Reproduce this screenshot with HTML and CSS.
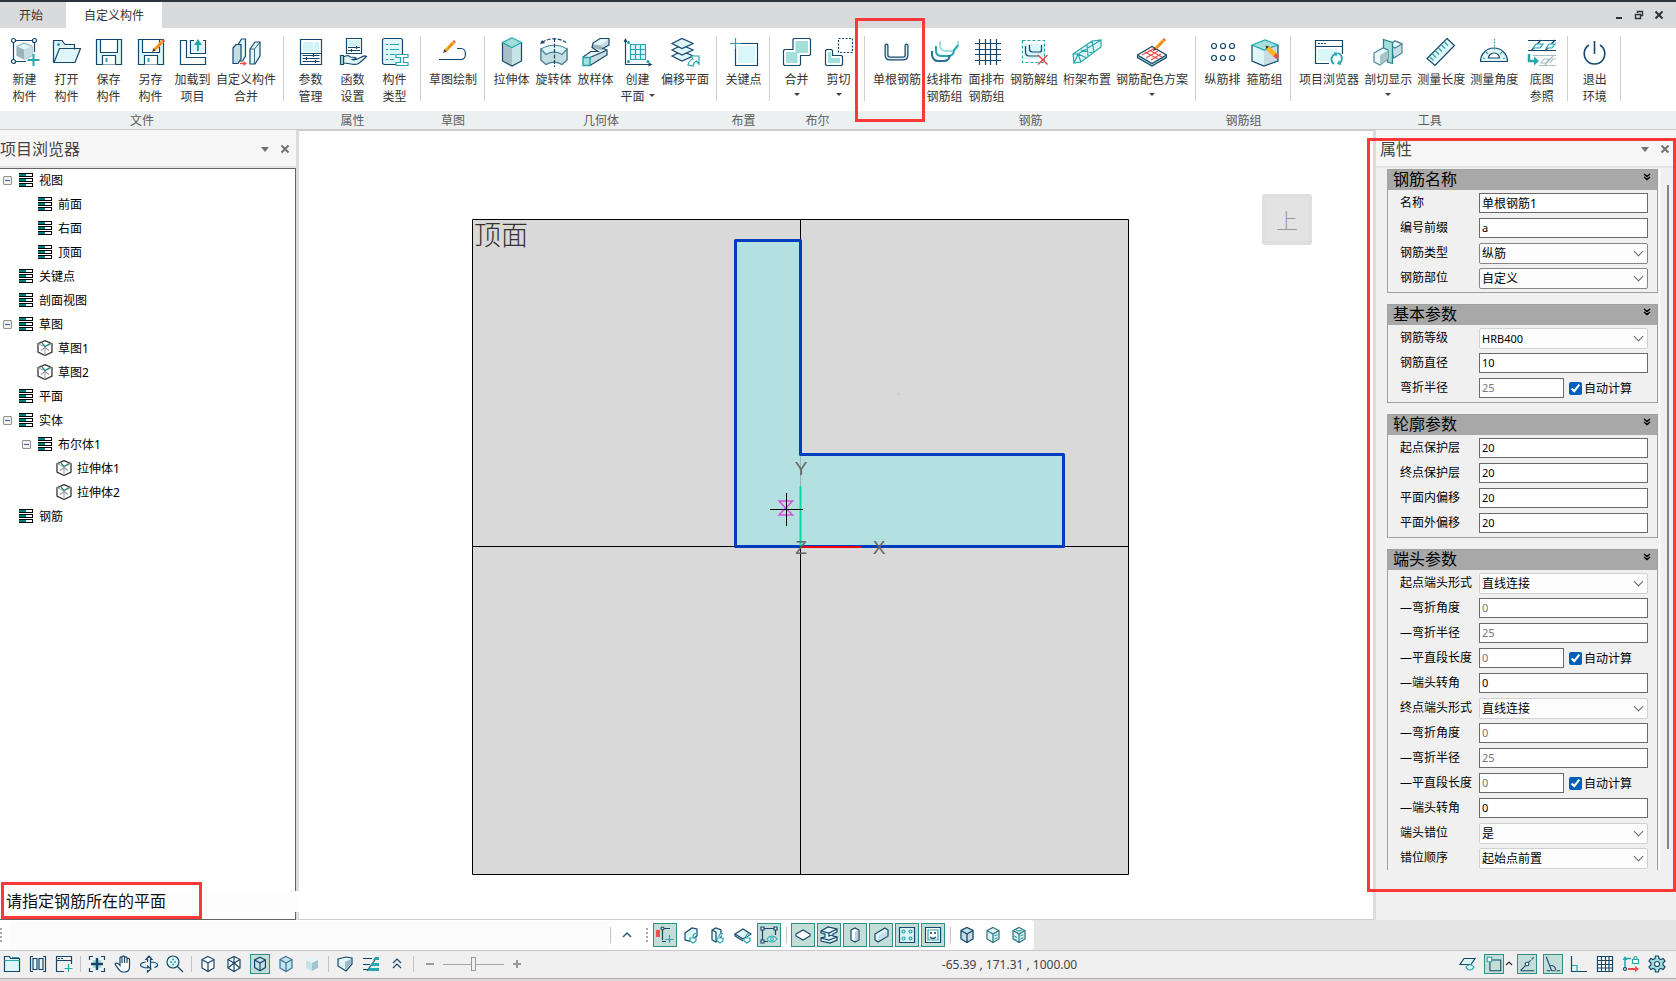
FILE: index.html
```html
<!DOCTYPE html>
<html lang="zh-CN">
<head>
<meta charset="utf-8">
<title>自定义构件</title>
<link rel="stylesheet" href="styles.css">
</head>
<body>
<svg class="defs" aria-hidden="true">
  <symbol id="pencil" viewBox="0 0 12 12"><path d="M1 11l1-3L9 1l2 2-7 7z" fill="#ffb21a"/><path d="M9 1l1-1 2 2-1 1z" fill="#f04a4a"/><path d="M8 2l2 2-6 6-1-1z" fill="#f58a1f"/><path d="M0 12l1.400-3.600 2.200 2.200z" fill="#5a3a35"/></symbol>
  <symbol id="list" viewBox="0 0 14 14"><path d="M0 0h14v4H0zM0 5h14v4H0zM0 10h14v4H0z" fill="#000"/><path d="M0 1h7v2H0zM0 6h7v2H0zM0 11h7v2H0z" fill="#008080"/><path d="M7 1h6v2H7zM7 6h6v2H7zM7 11h6v2H7z" fill="#fff"/></symbol>
  <symbol id="solid" viewBox="0 0 16 16"><path d="M8 .7l7 3v8.500l-7 3.300-7-3.300V3.700z" fill="#fff" stroke="#333" stroke-width="1.300"/><path d="M1 3.700l7 3 7-3M8 6.700v8.500" stroke="#aaa"/><path d="M8 6.500l5-3M5 3l3 3.500" stroke="#23807f"/><path d="M8 7.500l-4 3M8 7.500l4 3" stroke="#999"/></symbol>
  <symbol id="cube" viewBox="0 0 20 20"><path d="M10 2.500l6 3v8.500l-6 3.500-6-3.500V5.500z"/><path d="M4 5.500l6 3.500 6-3.500M10 9v8.500" fill="none"/></symbol>
  <symbol id="chev2" viewBox="0 0 8 8"><path d="M1 1l3 2.500L7 1M1 4l3 2.500L7 4" stroke="#000" stroke-width="1.500"/></symbol>
  <symbol id="close" viewBox="0 0 10 10"><path d="M1.500 1.500l7 7M8.500 1.500l-7 7" stroke="currentColor" stroke-width="2"/></symbol>
</svg>

<header class="topbar">
  <nav class="tabs">
    <button class="tab tab-start">开始</button>
    <button class="tab active">自定义构件</button>
  </nav>
  <div class="window-buttons">
    <button aria-label="最小化"><svg viewBox="0 0 10 10"><path d="M2 8h6" stroke="#333" stroke-width="2"/></svg></button>
    <button aria-label="还原"><svg viewBox="0 0 10 10"><path d="M3.500 3V1.500h5v4H7" stroke="#333" stroke-width="1.400"/><path d="M1.500 4.500h5v4h-5z" stroke="#333" stroke-width="1.400"/></svg></button>
    <button aria-label="关闭"><svg viewBox="0 0 10 10"><use href="#close"/></svg></button>
  </div>
</header>

<section class="ribbon">
  <div class="group first">
    <div class="tools">
      <button class="tool"><svg viewBox="0 0 30 30"><path class="n" d="M6 3.500h16M3.500 6v16M24.500 6v9M6 24.500h10"/><circle class="n w" cx="3.500" cy="3.500" r="2"/><circle class="n w" cx="24.500" cy="3.500" r="2"/><circle class="n w" cx="3.500" cy="24.500" r="2"/><path d="M14 6l8 3.500v9L14 22l-7-3.500v-9z" fill="#dff6f8" stroke="#8fb3bd"/><path d="M7 9.500l7 3V22l-7-3.500z" fill="#9db4bb"/><path d="M14 12.500l8-3v9L14 22z" fill="#c5dde3"/><path d="M23.500 17v12M17.500 23h12" stroke="#26a6ad" stroke-width="2"/></svg><span>新建<br>构件</span></button>
      <button class="tool"><svg viewBox="0 0 30 30"><path class="n f" d="M1.500 25.500v-22H10l3 4h9.500v5M2 25.500L7.500 11.500h21L23 25.500z"/><circle cx="6.500" cy="7.500" r="1.500" fill="#26a6ad"/></svg><span>打开<br>构件</span></button>
      <button class="tool"><svg viewBox="0 0 30 30"><path class="n f" d="M2.500 2.500h25v25h-25z"/><path class="n w" d="M6.500 2.500h17v13h-17zM8.500 27.500v-9h13v9"/><path class="t2" d="M12.500 21v4"/></svg><span>保存<br>构件</span></button>
      <button class="tool"><svg viewBox="0 0 30 30"><path class="n f" d="M2.500 2.500h25v25h-25z"/><path class="n w" d="M6.500 2.500h17v13h-17zM8.500 27.500v-9h13v9"/><path class="t2" d="M12.500 21v4"/><use href="#pencil" x="16" y="2" width="13" height="13"/></svg><span>另存<br>构件</span></button>
      <button class="tool"><svg viewBox="0 0 30 30"><path class="n" d="M2.500 3.500h6v17h19v7h-25z"/><path class="n" d="M16 3.500h-3.500v13h15v-13H25"/><path d="M14 5h12v10H14z" fill="#dff6f8"/><path d="M20 14V7" stroke="#26a6ad" stroke-width="2"/><path d="M16 8l4-6 4 6z" fill="#26a6ad"/></svg><span>加载到<br>项目</span></button>
      <button class="tool"><svg viewBox="0 0 30 30"><path class="n f" d="M7.500 24V7l3-5h4v17l-3 5z"/><path class="n" d="M2 11l3-3.500h5V22l-3 4.500H2z" fill="#c2dde3"/><path class="n f" d="M19 12l5-7h5v14l-5 8h-5z"/><path class="n" d="M19 12h4.500v15M23.500 12L29 5" stroke-width=".8"/><path d="M9 26.500h4" stroke="#f04a4a" stroke-width="1.500"/><path d="M12.500 24l3.500 2.500-3.500 2.500z" fill="#f04a4a"/></svg><span>自定义构件<br>合并</span></button>
    </div>
    <div class="group-title">文件</div>
  </div>
  <div class="group">
    <div class="tools">
      <button class="tool"><svg viewBox="0 0 30 30"><path class="n w" d="M4.500 2.500h21v25h-21z"/><path d="M7 5h10v10H7zM18 5h5v10h-5z" fill="#d3f4f7"/><path class="n" d="M4.500 16.500h21M6.500 18.500h17M6.500 21.500h17M6.500 24.500h17M17.500 17v3M10.500 20v3M19.500 23v3"/></svg><span>参数<br>管理</span></button>
      <button class="tool"><svg viewBox="0 0 30 30"><path class="n w" d="M8.500 1.500h15v15h-15z"/><path d="M10 3h12v6H10z" fill="#d3f4f7"/><path class="n" d="M10 10.500h12M10 13.500h12M18.500 9v3M13.500 12v3"/><path class="n f" d="M5.500 20c3-2 5-2 7 0l5 .5c2 1-1 2-4 2 4 1 6 0 9-2s5-2 6-1c-3 3-6 6-9 7.500-4 1.500-9-1-14-1z"/><path class="n" d="M2.500 18.500h3v9h-3z" fill="#a3e0dc"/></svg><span>函数<br>设置</span></button>
      <button class="tool"><svg viewBox="0 0 30 30"><rect class="n f" x="2.500" y="1.500" width="20" height="26" rx="2"/><path class="t" d="M6 7.500h2M10 7.500h9M6 12.500h2M10 12.500h9M6 17.500h2M10 17.500h5M6 22.500h2M10 22.500h4"/><path d="M16 17.500h12v3h-4.500v5H28v3H16v-3h4.500v-5H16z" class="t w"/></svg><span>构件<br>类型</span></button>
    </div>
    <div class="group-title">属性</div>
  </div>
  <div class="group">
    <div class="tools">
      <button class="tool"><svg viewBox="0 0 30 30"><path class="n" d="M1 22.500h22c6 0 6-11 0-11h-4"/><use href="#pencil" x="5" y="3" width="13" height="13"/></svg><span>草图绘制</span></button>
    </div>
    <div class="group-title">草图</div>
  </div>
  <div class="group">
    <div class="tools">
      <button class="tool"><svg viewBox="0 0 30 30"><path d="M5.500 5.500l9.500 5V29l-9.500-5z" fill="#a9bfc5"/><path d="M24.500 5.500l-9.500 5V29l9.500-5z" fill="#c8e3e8"/><path class="n" d="M5.500 5.500V24l9.500 5 9.500-5V5.500"/><path d="M15 .7l9.500 4.800L15 10.500 5.500 5.500z" fill="#a3e0dc" stroke="#26a6ad"/></svg><span>拉伸体</span></button>
      <button class="tool"><svg viewBox="0 0 30 30"><path class="f" d="M2 12c8-5 18-5 26 0v11l-5 4.500c-5-3-11-3-16 0L2 23z" stroke="#4f8396"/><path d="M2 12l5 5.500c5-3 11-3 16 0l5-5.500v11l-5 4.500c-5-3-11-3-16 0L2 23z" fill="#c5dde3" stroke="#4f8396"/><path class="n" d="M3 5.500c7-5 17-5 24 0M15.500 1v29" stroke-dasharray="4 1.500"/><path d="M1 7l2-4 3 3z" fill="#16476a"/></svg><span>旋转体</span></button>
      <button class="tool"><svg viewBox="0 0 30 30"><path d="M2 20l8-5.500h7l-6-4 1-4.500 7-4.500h9V8l-6 3.500 4 1.500v5L9 28.500H2z" fill="#c5dde3"/><path d="M2 20l8-5.500h7l-6-4 1-3.500 7-5h8l-8 7 6 4-14 7.500z" fill="#e8f8fa"/><path d="M11 10.500l1-3 8 1 3 3-2 2z" fill="#9db4bb"/><path class="n" d="M2 20l8-5.500h7l-6-4 1-4.500 7-4.500h9V8l-6 3.500 4 1.500v5L9 28.500M9 20.500l16-7"/><path d="M2 20.500h7v8H2z" fill="#a3e0dc" stroke="#26a6ad" stroke-width="1.500"/></svg><span>放样体</span></button>
      <button class="tool"><svg viewBox="0 0 30 30"><path d="M7.500 7.500h15v15h-15z" fill="#dff6f8"/><path class="t" d="M7.500 7.500h15v15h-15zM12.500 7.500v15M17.500 7.500v15M7.500 12.500h15M7.500 17.500h15"/><path class="n" d="M2.500 3v24.500H27"/><path d="M2.500 1l2 4h-4zM29.500 27.500l-4-2v4z" fill="#16476a"/><circle cx="5.500" cy="5.500" r="1.600" fill="#26a6ad"/><circle cx="5.500" cy="24.500" r="1.600" fill="#26a6ad"/><circle cx="25" cy="24.500" r="1.600" fill="#26a6ad"/></svg><span>创建<br>平面<i class="caret inline"></i></span></button>
      <button class="tool"><svg viewBox="0 0 30 30"><path class="n f" d="M2 19l10-5 11 5-11 5z"/><path class="n f" d="M2 13l10-5 11 5-11 5z"/><path class="n f" d="M2 6.500l10-5 11 5-11 5z"/><path class="t w" d="M18 28c1-4 2-5 5-6l-2-3h8v8l-2.500-3c-2 1-3 2-3.500 5z"/></svg><span>偏移平面</span></button>
    </div>
    <div class="group-title">几何体</div>
  </div>
  <div class="group">
    <div class="tools">
      <button class="tool"><svg viewBox="0 0 30 30"><path d="M9 9h17v17H9z" fill="#d9f7f9"/><path class="n" d="M10 6.500h18.500v22h-22V10"/><path class="t" d="M6.500 1v11M1 6.500h11"/></svg><span>关键点</span></button>
    </div>
    <div class="group-title">布置</div>
  </div>
  <div class="group">
    <div class="tools">
      <button class="tool"><svg viewBox="0 0 30 30"><path d="M4 15h9.500V4H26v12H15.500v10H4z" fill="#a3e0dc"/><path class="n" d="M2.500 12.500H11v-10l1-1h15.500l1 1v15l-1 1h-9v9l-1 1h-15l-1-1v-14z"/></svg><span>合并<br><i class="caret"></i></span></button>
      <button class="tool"><svg viewBox="0 0 30 30"><path d="M4 15h3v6h9v5H4z" fill="#a3e0dc"/><path class="n" d="M2.500 12.500h5l1 1v5h9l1 1v8l-1 1h-15l-1-1v-14z"/><path class="n" stroke-dasharray="2 1.500" d="M14.500 1.500h14v14h-14z"/></svg><span>剪切<br><i class="caret"></i></span></button>
    </div>
    <div class="group-title">布尔</div>
  </div>
  <div class="group">
    <div class="tools">
      <button class="tool"><svg viewBox="0 0 30 30"><path d="M4.500 8.500v9.500q0 3.500 3.500 3.500h13q3.500 0 3.500-3.500V8.500" stroke="#16476a" stroke-width="4" stroke-linecap="round"/><path d="M4.500 8.500v9.500q0 3.500 3.500 3.500h13q3.500 0 3.500-3.500V8.500" stroke="#e0f2f6" stroke-width="1.500" stroke-linecap="round"/></svg><span>单根钢筋</span></button>
      <button class="tool"><svg viewBox="0 0 30 30" stroke-width="2"><path class="thick" stroke="#a3e0dc" d="M10 4v4q0 6 6 6h5q6 0 7-6V4"/><path class="thick" stroke="#26a6ad" d="M6 9v5q0 5 6 5h6q6 0 6-6l4-5"/><path class="thick" stroke="#2e6f97" d="M2 14v4q1 6 6 6h6q5 0 6-6"/></svg><span>线排布<br>钢筋组</span></button>
      <button class="tool"><svg viewBox="0 0 30 30"><path class="n" d="M7.500 2v26M13.500 2v26M18.500 2v26M24.500 2v26M3 6.500h26M3 12.500h26M3 17.500h26M3 23.500h26"/></svg><span>面排布<br>钢筋组</span></button>
      <button class="tool"><svg viewBox="0 0 30 30"><path d="M5 7h21v15H5z" fill="#d9f5f8"/><path class="t" stroke-dasharray="3 2" d="M3.500 3.500h22v22h-22z"/><path class="n" d="M6.500 9v6q0 4 4 4h9M10.500 8v4q0 3 3 3h7q2 0 2-2V8"/><path d="M19 18l9.500 9.500M28.500 18L19 27.500" stroke="#f04a4a" stroke-width="1.500"/></svg><span>钢筋解组</span></button>
      <button class="tool"><svg viewBox="0 0 30 30"><path class="f" d="M1 17L20 4l9-1v7L9 25l-7 1z"/><path class="t" d="M1 17L20 4l9-1v7L9 25l-7 1zM1 17l5 0 23-14M6 17l3 8M2 26l4-9M6 17l9 4M9 13l12 3M15 8l1 12M20 4l2 11"/></svg><span>桁架布置</span></button>
      <button class="tool"><svg viewBox="0 0 30 30"><path class="n" d="M0.500 18v2.500L15 29l14.500-8.500V18" fill="#a3e0dc"/><path class="n w" d="M.500 18L15 9.500 29.500 18 15 26.500z"/><path d="M8 15l13 7M12 13l13 7M5 18l13-7M9 21l12-7M14 23l10-6" stroke="#f04a4a"/><use href="#pencil" x="16" y="1" width="13" height="13"/></svg><span>钢筋配色方案<br><i class="caret"></i></span></button>
    </div>
    <div class="group-title">钢筋</div>
  </div>
  <div class="group">
    <div class="tools">
      <button class="tool"><svg viewBox="0 0 30 30"><g class="n"><circle cx="6" cy="9" r="2.500"/><circle cx="15" cy="9" r="2.500"/><circle cx="24" cy="9" r="2.500"/><circle cx="6" cy="21" r="2.500"/><circle cx="15" cy="21" r="2.500"/><circle cx="24" cy="21" r="2.500"/></g></svg><span>纵筋排</span></button>
      <button class="tool"><svg viewBox="0 0 30 30"><path class="f" d="M2 8l12 5v16L2 24z"/><path d="M14 13l14-5v16l-14 5z" fill="#c5dde3"/><path class="n" d="M2 8v16l12 5 14-5V8"/><path d="M2 8l13-5 13 5-14 5z" fill="#a3e0dc" stroke="#26a6ad"/><path d="M16 9l3.500.500 8.500 8-3 3.500-8.500-8z" fill="#ffb21a"/><path d="M26 16l3 3-2.500 3-3-2.500z" fill="#f04a4a"/><path d="M15.500 8.500l3.500 1-2.500 2.500z" fill="#412a2a"/></svg><span>箍筋组</span></button>
    </div>
    <div class="group-title">钢筋组</div>
  </div>
  <div class="group">
    <div class="tools">
      <button class="tool"><svg viewBox="0 0 30 30"><path class="n" d="M15 26.500H1.500v-23h27V17M1.500 9.500h27"/><path d="M4 12h20v4l-6 2-2 6H4z" fill="#d9f7f9"/><path class="n" stroke-dasharray="2 1" d="M4 6.500h8"/><path class="t" stroke-width="1.800" d="M20 27c-4-3-3-8 1-10M24 16c5 2 5 8 1 11"/><path d="M20 15l4 1-2 4zM27 28l-4-1 2-4z" fill="#26a6ad"/></svg><span>项目浏览器</span></button>
      <button class="tool"><svg viewBox="0 0 30 30"><path d="M16 8l6-4 7 3v9l-8 5z" fill="#c5dde3" stroke="#4f8396"/><path d="M16 8l6-4 7 3-7 4z" fill="#e8f8fa" stroke="#4f8396"/><path d="M10.500 2.500l9 3v21l-5-1.500V13l-4-2z" fill="#a3e0dc" stroke="#26838f" stroke-width="1.300"/><path d="M1 16l9-5 5 2v9L7 28l-6-3z" fill="#e8f8fa" stroke="#4f8396"/><path d="M7 18.500l8-5.500v9L7 28z" fill="#a9c3ca"/></svg><span>剖切显示<br><i class="caret"></i></span></button>
      <button class="tool"><svg viewBox="0 0 30 30"><path class="n f" d="M21 1.500l7.500 7L9 28.500l-8-7z"/><path class="t" d="M18.500 5l3.500 3.500M15.500 8l3.500 3.500M12.500 11l3.500 3.500M9.500 14l3.500 3.500M6.500 17l3.500 3.500M4 20l3.500 3.500"/></svg><span>测量长度</span></button>
      <button class="tool"><svg viewBox="0 0 30 30"><path class="n f" d="M1.500 24.500a13.500 13.500 0 0 1 27 0z"/><path class="n w" d="M9.500 21a5.500 5 0 0 1 11 0z"/><path class="t" stroke-dasharray="1.500 1.500" d="M15.500 2v11"/><path class="t" d="M4 21l2 .5M7 15l2 2M26 21l-2 .5M23 15l-2 2"/></svg><span>测量角度</span></button>
      <button class="tool"><svg viewBox="0 0 30 30"><path class="n" d="M1 3.500h28M1 13.500h28M4 14L14 3M18 14L28 3"/><path class="t f" d="M6 11l3-4h7l-3 4zM19 11l3-4h6l-3 4z"/><path d="M6 18.500h23M12 28.500h17M18 28l8-9M14 26l3-4h5l-3 4zM23 26l3-4h3" stroke="#a3c0c8"/><path d="M2 17v7h6" stroke="#26a6ad" stroke-width="2.500"/><path d="M7 19.500l5 4.500-5 4.500z" fill="#26a6ad"/></svg><span>底图<br>参照</span></button>
    </div>
    <div class="group-title">工具</div>
  </div>
  <div class="group">
    <div class="tools">
      <button class="tool"><svg viewBox="0 0 30 30"><path class="n" stroke-width="1.600" d="M9 8a10.300 10.300 0 1 0 11 0M14.500 4v13"/></svg><span>退出<br>环境</span></button>
    </div>
    <div class="group-title"></div>
  </div>
  <div class="group-rest"><div class="group-title"></div></div>
  <div class="mark mark-tool"></div>
</section>

<main class="workspace">
  <aside class="browser">
    <div class="panel-head"><h2>项目浏览器</h2><button aria-label="菜单"><i class="down"></i></button><button aria-label="关闭"><svg viewBox="0 0 10 10"><use href="#close"/></svg></button></div>
    <ul class="tree">
      <li><i class="toggle"></i><svg><use href="#list"/></svg>视图</li>
      <li class="l1"><svg><use href="#list"/></svg>前面</li>
      <li class="l1"><svg><use href="#list"/></svg>右面</li>
      <li class="l1"><svg><use href="#list"/></svg>顶面</li>
      <li class="l0"><svg><use href="#list"/></svg>关键点</li>
      <li class="l0"><svg><use href="#list"/></svg>剖面视图</li>
      <li><i class="toggle"></i><svg><use href="#list"/></svg>草图</li>
      <li class="l1"><svg class="big"><use href="#solid"/></svg>草图1</li>
      <li class="l1"><svg class="big"><use href="#solid"/></svg>草图2</li>
      <li class="l0"><svg><use href="#list"/></svg>平面</li>
      <li><i class="toggle"></i><svg><use href="#list"/></svg>实体</li>
      <li class="sub"><i class="toggle"></i><svg><use href="#list"/></svg>布尔体1</li>
      <li class="l2"><svg class="big"><use href="#solid"/></svg>拉伸体1</li>
      <li class="l2"><svg class="big"><use href="#solid"/></svg>拉伸体2</li>
      <li class="l0"><svg><use href="#list"/></svg>钢筋</li>
    </ul>
    <div class="prompt">请指定钢筋所在的平面</div>
    <div class="mark mark-prompt"></div>
  </aside>

  <section class="canvas">
    <svg class="scene" viewBox="299 131 1074 788">
      <path d="M472.500 219.500h656v655h-656z" fill="#d9d9d9" stroke="#000"/>
      <path d="M800.500 219v656M472 546.500h657" stroke="#000"/>
      <path d="M735.500 240.500h65v214h263v92h-328z" fill="#b3e0e1" stroke="#003cc0" stroke-width="3" stroke-linejoin="round"/>
      <path d="M800.500 456v30" stroke="#9cb5b0"/>
      <path d="M800.500 486v60" stroke="#00dca0" stroke-width="2"/>
      <path d="M801 547h60" stroke="#f00000" stroke-width="2"/>
      <path d="M779 501h13.500l-13.500 14h13.500z" stroke="#d850d8" stroke-width="1.500"/>
      <path d="M786.500 493v33M770 509.500h33" stroke="#000"/>
      <path d="M898 394h1" stroke="#aaa"/>
      <text x="801" y="475" class="axis">Y</text>
      <text x="801" y="554" class="axis">Z</text>
      <text x="879" y="554" class="axis">X</text>
      <text x="474" y="245" class="view-name">顶面</text>
      <rect x="1262" y="194" width="50" height="51" rx="3" fill="#dfdfdf"/>
      <path d="M1266 198h42v43h-42z" fill="#e3e3e3"/>
      <text x="1287" y="229" class="face">上</text>
    </svg>
  </section>

  <aside class="props">
    <div class="panel-head"><h2>属性</h2><button aria-label="菜单"><i class="down"></i></button><button aria-label="关闭"><svg viewBox="0 0 10 10"><use href="#close"/></svg></button></div>
    <div class="props-body">
      <div class="sections">
        <fieldset class="card">
          <div class="card-head">钢筋名称<svg><use href="#chev2"/></svg></div>
          <div class="row"><label for="a1">名称</label><input id="a1" value="单根钢筋1"></div>
          <div class="row"><label for="a2">编号前缀</label><input id="a2" class="num" value="a"></div>
          <div class="row"><label for="a3">钢筋类型</label><span class="sel edge"><select id="a3"><option>纵筋</option></select></span></div>
          <div class="row"><label for="a4">钢筋部位</label><span class="sel edge"><select id="a4"><option>自定义</option></select></span></div>
        </fieldset>
        <fieldset class="card">
          <div class="card-head">基本参数<svg><use href="#chev2"/></svg></div>
          <div class="row"><label for="b1">钢筋等级</label><span class="sel"><select id="b1" class="num"><option>HRB400</option></select></span></div>
          <div class="row"><label for="b2">钢筋直径</label><input id="b2" class="num" value="10"></div>
          <div class="row"><label for="b3">弯折半径</label><input id="b3" class="num" disabled value="25"><label class="auto"><input type="checkbox" checked>自动计算</label></div>
        </fieldset>
        <fieldset class="card">
          <div class="card-head">轮廓参数<svg><use href="#chev2"/></svg></div>
          <div class="row"><label for="c1">起点保护层</label><input id="c1" class="num" value="20"></div>
          <div class="row"><label for="c2">终点保护层</label><input id="c2" class="num" value="20"></div>
          <div class="row"><label for="c3">平面内偏移</label><input id="c3" class="num" value="20"></div>
          <div class="row"><label for="c4">平面外偏移</label><input id="c4" class="num" value="20"></div>
        </fieldset>
        <fieldset class="card open">
          <div class="card-head">端头参数<svg><use href="#chev2"/></svg></div>
          <div class="row"><label for="d1">起点端头形式</label><span class="sel"><select id="d1"><option>直线连接</option></select></span></div>
          <div class="row"><label for="d2">—弯折角度</label><input id="d2" class="num" disabled value="0"></div>
          <div class="row"><label for="d3">—弯折半径</label><input id="d3" class="num" disabled value="25"></div>
          <div class="row"><label for="d4">—平直段长度</label><input id="d4" class="num" disabled value="0"><label class="auto"><input type="checkbox" checked>自动计算</label></div>
          <div class="row"><label for="d5">—端头转角</label><input id="d5" class="num" value="0"></div>
          <div class="row"><label for="d6">终点端头形式</label><span class="sel"><select id="d6"><option>直线连接</option></select></span></div>
          <div class="row"><label for="d7">—弯折角度</label><input id="d7" class="num" disabled value="0"></div>
          <div class="row"><label for="d8">—弯折半径</label><input id="d8" class="num" disabled value="25"></div>
          <div class="row"><label for="d9">—平直段长度</label><input id="d9" class="num" disabled value="0"><label class="auto"><input type="checkbox" checked>自动计算</label></div>
          <div class="row"><label for="d10">—端头转角</label><input id="d10" class="num" value="0"></div>
          <div class="row"><label for="d11">端头错位</label><span class="sel"><select id="d11"><option>是</option></select></span></div>
          <div class="row"><label for="d12">错位顺序</label><span class="sel"><select id="d12"><option>起始点前置</option></select></span></div>
        </fieldset>
      </div>
      <div class="scroll"><i></i></div>
    </div>
    <div class="mark mark-props"></div>
  </aside>
</main>

<section class="viewbar">
  <div class="viewbar-cmd"><i class="grip"></i><div class="cmd-field"></div></div>
  <div class="viewbar-tools">
    <i class="sep"></i>
    <button class="vb wide"><svg viewBox="0 0 20 20"><path d="M6 12l4-4 4 4" stroke="#2b6178" stroke-width="1.500"/></svg></button>
    <i class="grip"></i>
    <button class="vb on"><svg viewBox="0 0 20 20"><path d="M1 5h4v7H1z" fill="#f05050"/><path class="n" d="M7.500 4v11M9 3.500h6M7 16.500h4"/><circle class="n w" cx="7.500" cy="3.500" r="1.500"/><path class="t" d="M14.500 10v8M10.500 14.500h8"/></svg></button>
    <button class="vb"><svg viewBox="0 0 20 20"><path class="n f" d="M4 8l7-5 5 1v7l-8 5-4-1z"/><path class="t w" d="M9 13h6v3l-3 2-3-2zM12 12c0-3 2-4 4-3"/></svg></button>
    <button class="vb"><svg viewBox="0 0 20 20"><path class="n f" d="M5 5l4-2 5 2v9l-5 3-4-2zM5 5l4 2v9"/><path class="t w" d="M10 13h6v3l-3 2-3-2zM12 12c0-3 2-4 4-3"/></svg></button>
    <button class="vb"><svg viewBox="0 0 20 20"><path class="n f" d="M2 9l8-5 8 5-8 5zM2 9v2l8 5"/><path class="t w" d="M11 13h6v3l-3 2-3-2zM13 12c0-3 2-4 4-3"/></svg></button>
    <button class="vb on"><svg viewBox="0 0 20 20"><path class="n" d="M5 3.500h10M3.500 5v10M16.500 5v5M5 16.500h4"/><path class="n w" d="M2 2h3v3H2zM15 2h3v3h-3zM2 15h3v3H2z"/><path class="t f" d="M8 14c3-4 7-4 10 0-3 4-7 4-10 0z"/><circle class="t" cx="13" cy="14" r="1.500"/></svg></button>
    <i class="sep"></i>
    <button class="vb on"><svg viewBox="0 0 20 20"><path class="n w" d="M3 9l7-4 7 4v2l-7 4-7-4z"/></svg></button>
    <button class="vb on"><svg viewBox="0 0 20 20"><path class="n f" d="M2 6l7-4 9 2v3l-4 2v2l4 1v3l-7 3-9-2v-3l4-1V9L2 8z"/><path class="n" d="M2 6l8 2 8-4M10 8v3l4-1M2 13l8 2 8-3"/></svg></button>
    <button class="vb on"><svg viewBox="0 0 20 20"><path class="n w" d="M6 5l4-2 4 2v10l-4 2-4-2z"/><path d="M10 7l3-2v10l-3 1z" fill="#b8d0da"/></svg></button>
    <button class="vb on"><svg viewBox="0 0 20 20"><path class="n f" d="M4 9l10-6 3 2v6L7 17l-3-2z"/><path d="M7 11l9-5v5l-9 5z" fill="#c5dde3"/></svg></button>
    <button class="vb on"><svg viewBox="0 0 20 20"><path class="n f" d="M2.500 2.500h15v15h-15z"/><g class="t"><circle cx="6.500" cy="6.500" r="1.500"/><circle cx="13.500" cy="6.500" r="1.500"/><circle cx="6.500" cy="13.500" r="1.500"/><circle cx="13.500" cy="13.500" r="1.500"/></g></svg></button>
    <button class="vb on"><svg viewBox="0 0 20 20"><path class="n w" d="M2.500 2.500h15v15h-15z"/><path class="t" d="M5 5h10v10H5z"/><path class="n" d="M7 8h2M11 8h2M8 7v2M12 7v2M7 12c2 2 4 2 6 0"/></svg></button>
    <i class="sep"></i>
    <button class="vb"><svg class="cube-dark" viewBox="0 0 20 20"><use href="#cube"/></svg></button>
    <button class="vb"><svg class="cube-pale" viewBox="0 0 20 20"><use href="#cube"/><path class="t" d="M11.500 11l3-1.500M11.500 14l3-1.500"/></svg></button>
    <button class="vb"><svg class="cube-pale" viewBox="0 0 20 20"><use href="#cube"/><path class="t" d="M11.500 11l3-1.500M11.500 14l3-1.500M5 11l3 1.500M5 14l3 1.500M7 5l3 1 3-1"/></svg></button>
  </div>
</section>

<footer class="status">
  <div class="status-set">
    <button><svg viewBox="0 0 20 20"><path class="n f" d="M2.500 17.500v-15h5l1 2h9v13z"/><path class="t" d="M10 3.500h7M2.500 6.500h15"/></svg></button>
    <button><svg viewBox="0 0 20 20"><path class="n" d="M5 2.500H2.500v15H5M15 2.500h2.500v15H15"/><path class="n f" d="M5 4.500h4v11H5zM11 4.500h4v11h-4z"/></svg></button>
    <button><svg viewBox="0 0 20 20"><path class="n" d="M10 17.500H2.500v-15h15V10M2.500 6.500h15"/><path class="n" stroke-dasharray="2 1" d="M4 4.500h6"/><path class="t" d="M14.500 10v8M10.500 14.500h8"/></svg></button>
    <i class="sep"></i>
    <button><svg viewBox="0 0 20 20"><path class="n" d="M6 2.500H2.500V6M14 2.500h3.500V6M6 17.500H2.500V14M14 17.500h3.500V14"/><path d="M6 6h8v8H6z" fill="#a3e0dc"/><path d="M10 4v12M4 10h12" stroke="#16476a" stroke-width="2.500"/></svg></button>
    <button><svg viewBox="0 0 20 20"><path class="n w" d="M7 10V4c0-1.500 2-1.500 2 0v-1c0-1.500 2.500-1.500 2.500 0v1c0-1.500 2.500-1.500 2.500 0v1.500c0-1.500 2.500-1.500 2.500 0V13c0 3-2 5-5 5H9c-3-1-5-5-7-8 1-1.500 3-1 5 1.500zM9 4v5M11.500 4v5M14 5v4"/></svg></button>
    <button><svg viewBox="0 0 20 20"><path class="n f" d="M10 2l3 3.500h-1.500V8c5 0 7 1 7 3 0 1-1 2-3 2.500M8.500 8V5.500H7L10 2M6.500 8C3 8.500 1.500 9.500 1.500 11s3 3 7 3v-2l3.500 3-3.500 3v-2M11.500 8v7"/></svg></button>
    <button><svg viewBox="0 0 20 20"><circle class="n f" cx="8" cy="8" r="6"/><path class="n" d="M12.500 12.500l5.500 5.500"/><circle cx="6" cy="8" r="1" fill="#26a6ad"/><circle cx="10" cy="8" r="1" fill="#26a6ad"/><circle cx="8" cy="5.500" r="1" fill="#26a6ad"/><circle cx="8" cy="10.500" r="1" fill="#26a6ad"/></svg></button>
    <i class="sep"></i>
    <button><svg class="cube-wire" viewBox="0 0 20 20"><use href="#cube"/></svg></button>
    <button><svg class="cube-wire" viewBox="0 0 20 20"><use href="#cube"/><path class="n none" d="M10 2.500V9L4 14M10 9l6 5"/></svg></button>
    <button class="on"><svg class="cube-dark" viewBox="0 0 20 20"><use href="#cube"/></svg></button>
    <button><svg class="cube-blue" viewBox="0 0 20 20"><use href="#cube"/></svg></button>
    <button><svg viewBox="0 0 20 20"><path d="M10 3l6 3-6 3-6-3z" fill="#e6f5f7"/><path d="M4 6l6 3v8l-6-3z" fill="#c3e4e6"/><path d="M16 6l-6 3v8l6-3z" fill="#a3c4ca"/></svg></button>
    <i class="sep"></i>
    <button><svg viewBox="0 0 20 20"><path class="n f" d="M3 5l8-2 6 1v6l-6 7-8-5z"/><path d="M10 8l6-3v5l-6 6z" fill="#9db9c2"/></svg></button>
    <button><svg viewBox="0 0 20 20"><path class="n" d="M2 4.500h9M2 10.500h7M2 15.500h5M16 3L6 17"/><path d="M14 3h4v3h-6zM11 9h7v3H9zM8 14h10v3H6z" fill="#26a6ad"/></svg></button>
    <button><svg viewBox="0 0 20 20"><path class="n" d="M6 9l4-4 4 4M6 14l4-4 4 4"/></svg></button>
    <i class="sep"></i>
    <label class="zoom"><i class="minus"></i><input type="range" aria-label="缩放" min="0" max="100" value="50"><i class="plus"></i></label>
  </div>
  <div class="gap-a"></div>
  <output>-65.39 , 171.31 , 1000.00</output>
  <div class="gap-b"></div>
  <div class="status-set right">
    <button><svg viewBox="0 0 20 20"><path class="n f" d="M6 4.500h11l-4 6H2z"/><path class="t f" d="M8 13c2-3 6-3 8 0-2 4-6 4-8 0z"/></svg></button>
    <button class="on"><svg viewBox="0 0 20 20"><path class="n" d="M5.500 5.500h12v12h-12z"/><path class="t w" d="M2.500 2.500h5v5h-5z"/></svg></button>
    <button class="slim" aria-label="更多"><svg viewBox="0 0 8 20"><path d="M1 11l3-3 3 3" stroke="#333"/></svg></button>
    <button class="on"><svg viewBox="0 0 20 20"><path class="n" d="M3 17.500h15M3 17l5-5"/><circle class="n w" cx="10" cy="10" r="2"/><path class="n" stroke-dasharray="3 1.500" d="M12 8l6-6"/></svg></button>
    <button class="on"><svg viewBox="0 0 20 20"><path class="n" d="M2.500 2l6 15.500"/><path class="n" stroke-dasharray="4 1.500" d="M3 17.500h15"/><path class="n" d="M7 12c3-1 6 1 6 5"/></svg></button>
    <button><svg viewBox="0 0 20 20"><path class="n" d="M2.500 2v15.500H18"/><path class="t" d="M3 11.500h5v6"/></svg></button>
    <button><svg viewBox="0 0 20 20"><path class="n w" d="M2.500 2.500h15v15h-15zM6.500 2.500v15M10.500 2.500v15M14 2.500v15M2.500 6.500h15M2.500 10.500h15M2.500 14h15"/></svg></button>
    <button><svg viewBox="0 0 20 20"><path d="M4 14V5M4 4.500h6" stroke="#26a6ad" stroke-width="1.500"/><path d="M4 2l2.500 4h-5z" fill="#26a6ad"/><circle class="n" cx="4" cy="15" r="1.500"/><path d="M7 15h8" stroke="#f04a4a" stroke-width="2"/><path d="M14 12l4 3-4 3z" fill="#f04a4a"/><path class="t w" d="M11.500 5.500h6v4h-6zM13 5V4c0-2 3-2 3 0v1"/></svg></button>
    <button><svg viewBox="0 0 20 20"><path class="n" fill="#a3e0dc" d="M8.500 2h3l.5 2.500 2 1 2.300-1 1.700 2.700L16 9v2l2 1.800-1.700 2.700-2.300-1-2 1-.5 2.500h-3L8 15.500l-2-1-2.300 1L2 12.800 4 11V9L2 7.200l1.700-2.700 2.300 1 2-1z"/><circle class="n w" cx="10" cy="10" r="2.500"/></svg></button>
  </div>
</footer>
</body>
</html>
```
FILE: styles.css
```css
* { box-sizing: border-box; }
body {
  margin: 0;
  min-height: 100vh;
  display: flex;
  flex-direction: column;
  background: #e5e5e5;
  font: 12px/17px "Noto Sans", "Noto Sans CJK SC", sans-serif;
  color: #333;
}
button {
  margin: 0;
  padding: 0;
  border: 0;
  background: none;
  font: inherit;
  color: inherit;
}
svg { display: block; flex: none; fill: none; stroke-width: 1.2; }
.defs { position: absolute; width: 0; height: 0; }
.n { stroke: #16476a; }
.t { stroke: #26a6ad; }
.t2 { stroke: #26a6ad; stroke-width: 2; }
.thick { stroke-width: 2; }
.f { fill: #dff6f8; }
.w { fill: #fff; }
.none { fill: none; }

/* title row */
.topbar {
  display: flex;
  justify-content: space-between;
  height: 28px;
  border-top: 2px solid #2f353b;
  background: #d9dadc;
}
.tabs { display: flex; }
.tab { padding: 0 18px; }
.tab-start { padding: 0 23px 0 19px; }
.tab.active { background: #fff; }
.window-buttons { display: flex; align-items: center; gap: 10px; padding-right: 12px; color: #333; }
.window-buttons svg { width: 10px; height: 10px; }

/* ribbon */
.ribbon {
  position: relative;
  display: flex;
  height: 102px;
  background: #fff;
  border-bottom: 1px solid #c8c9ca;
}
.group { display: flex; flex-direction: column; flex: none; }
.group-rest { flex: 1; display: flex; flex-direction: column; justify-content: flex-end; }
.tools {
  position: relative;
  display: flex;
  height: 83px;
  padding: 9px 6px 0 5px;
}
.group.first .tools { padding-left: 3px; }
.tools::after {
  content: "";
  position: absolute;
  right: 0;
  top: 8px;
  width: 1px;
  height: 65px;
  background: #cfd0d1;
}
.tool {
  display: flex;
  flex-direction: column;
  align-items: center;
  gap: 4px;
  min-width: 42px;
  padding: 0 2px 0 3px;
  white-space: nowrap;
  text-align: center;
}
.tool svg { width: 30px; height: 30px; }
.group-title {
  height: 18px;
  background: #edf0f1;
  color: #5c5c5c;
  line-height: 19px;
  text-align: center;
}
.caret {
  display: block;
  width: 0;
  margin: 5px auto 0;
  border: 3px solid transparent;
  border-top-color: #444;
  border-bottom: 0;
}
.caret.inline { display: inline-block; margin: 0 0 4px 4px; }

/* red annotation frames */
.mark { position: absolute; border: 3px solid #fc3838; pointer-events: none; }
.mark-tool { left: 855px; top: -10px; width: 70px; height: 104px; }
.mark-prompt { left: 1px; bottom: 1px; width: 201px; height: 37px; }
.mark-props { left: -9px; top: 8px; right: 0; bottom: 28px; }

/* main area */
.workspace { flex: 1; display: flex; min-height: 790px; }
.panel-head {
  display: flex;
  align-items: center;
  gap: 11px;
  height: 38px;
  padding-top: 2px;
  background: #f6f6f6;
  border-bottom: 2px solid #e4e4e4;
}
.panel-head h2 { flex: 1; margin: 0; font-size: 16px; line-height: 22px; font-weight: 400; color: #444; }
.panel-head button { color: #707070; }
.panel-head svg { width: 10px; height: 10px; }
.down { display: block; border: 4px solid transparent; border-top: 5px solid #707070; border-bottom: 0; }

.browser {
  position: relative;
  display: flex;
  flex-direction: column;
  width: 299px;
  border-right: 3px solid #dcdcdc;
}
.browser .panel-head { padding-right: 6px; }
.tree {
  flex: 1;
  margin: 0;
  padding: 0;
  list-style: none;
  background: #fff;
  box-shadow: inset 0 1px #646464, inset -1px -1px #646464;
  color: #000;
}
.tree li { display: flex; align-items: center; gap: 6px; height: 24px; padding-left: 3px; }
.tree .l0 { padding-left: 19px; }
.tree .l1 { padding-left: 38px; }
.tree .l2 { padding-left: 57px; }
.tree .sub { padding-left: 22px; }
.tree svg { width: 14px; height: 14px; }
.tree svg.big { width: 16px; height: 16px; margin: 0 -1px; }
.toggle {
  width: 9px;
  height: 9px;
  margin-right: 1px;
  border: 1px solid #919191;
  border-radius: 1px;
  background: linear-gradient(#4058b0, #4058b0) center / 5px 1px no-repeat #f0f0f0;
}
.prompt {
  position: absolute;
  left: 0;
  right: -3px;
  bottom: 8px;
  padding-left: 6px;
  background: #fdfdfd;
  color: #111;
  font-size: 16px;
  line-height: 21px;
}

.canvas { flex: 1; min-width: 0; background: #fff; border-top: 1px solid #ccc; border-bottom: 1px solid #ccc; }
.scene { width: 100%; height: 100%; stroke-width: 1; }
.axis { font: 19px "Liberation Sans", sans-serif; fill: #666; text-anchor: middle; }
.view-name { font: 27px "Noto Sans CJK SC", sans-serif; font-weight: 300; fill: #333; }
.face { font: 22px "Noto Sans CJK SC", sans-serif; font-weight: 300; fill: #999; text-anchor: middle; }

/* property panel */
.props {
  position: relative;
  display: flex;
  flex-direction: column;
  width: 303px;
  border-left: 3px solid #dcdcdc;
  background: #f0f0f0;
}
.props .panel-head { padding: 2px 6px 0 4px; }
.props-body { display: flex; padding-top: 1px; }
.sections {
  display: flex;
  flex-direction: column;
  gap: 11px;
  width: 284px;
  padding: 0 1px 0 11px;
  border-right: 1px solid #fff;
}
.scroll { padding: 16px 0 21px 7px; }
.scroll i { display: block; width: 2px; height: 100%; background: #858585; }
.card { min-width: 0; margin: 0; padding: 0 0 2px; border: 1px solid #a0a0a0; color: #000; }
.card.open { border-bottom: 0; padding-bottom: 0; }
.card-head {
  display: flex;
  justify-content: space-between;
  height: 20px;
  padding: 0 6px 0 5px;
  background: #a8a8a8;
  font-size: 16px;
  line-height: 19px;
}
.card-head svg { width: 8px; height: 8px; margin-top: 3px; }
.row { display: flex; align-items: center; height: 25px; padding: 0 9px 0 12px; }
.row > label:first-child { flex: none; width: 79px; white-space: nowrap; }
.row > input {
  flex: 1;
  min-width: 0;
  height: 20px;
  padding: 0 2px;
  border: 1px solid #6a6a6a;
  background: #fff;
  font: inherit;
  color: #000;
}
.row > input.num, .sel select.num { font-size: 11px; }
.row > input:disabled { color: #777; }
.sel { position: relative; flex: 1; margin-top: 1px; }
.sel select {
  display: block;
  width: 100%;
  height: 21px;
  padding: 1px 2px 0;
  appearance: none;
  border: 1px solid #d0d0d0;
  border-radius: 2px;
  background: #fdfdfd;
  font: inherit;
  color: #000;
}
.sel.edge select { border-color: #868686; }
.sel::after {
  content: "";
  position: absolute;
  right: 6px;
  top: 5px;
  width: 6px;
  height: 6px;
  border: solid #666;
  border-width: 0 1px 1px 0;
  transform: rotate(45deg);
}
.auto { display: flex; align-items: center; gap: 2px; width: 84px; padding: 2px 0 0 5px; white-space: nowrap; }
.auto input {
  width: 13px;
  height: 13px;
  margin: 0;
  accent-color: #005fb8;
}

/* view toolbar */
.viewbar { display: flex; height: 30px; background: #e5e5e5; }
.viewbar-cmd { display: flex; align-items: center; flex: 0 1 610px; background: #fff; }
.cmd-field { flex: 1; height: 28px; margin-left: 7px; background: #fcfcfc; }
.viewbar-tools { display: flex; align-items: center; gap: 2px; padding-right: 3px; background: #fff; border-radius: 0 3px 3px 0; }
.grip { width: 2px; height: 14px; background: repeating-linear-gradient(#aaa 0 2px, transparent 2px 4px); }
.sep { width: 1px; height: 16px; background: #c4c4c4; }
.viewbar-tools .sep { margin: 0 2px 0 3px; }
.viewbar-tools .sep:first-child { margin: 0; }
.viewbar-tools > .grip { margin: 0 3px 0 4px; }
.vb { display: grid; place-items: center; width: 24px; height: 24px; }
.vb.wide { width: 27px; }
.vb svg { width: 20px; height: 20px; }
.on { background: #c3ddd9; border: 1px solid #2f8f83; }
.cube-dark { fill: #c5dde3; stroke: #16476a; stroke-width: 1.3; }
.cube-wire { fill: #fff; stroke: #16476a; }
.cube-pale { fill: #e1f3f5; stroke: #2e6f7d; }
.cube-blue { fill: #c5e6ee; stroke: #3a7397; }

/* status bar */
.status {
  display: flex;
  align-items: center;
  height: 31px;
  padding-bottom: 4px;
  background: linear-gradient(#f0f0f0, #f0f0f0) top / 100% 27px no-repeat, linear-gradient(#aaa, #aaa) top / 100% 28px no-repeat #dcdadb;
  border-top: 1px solid #c8c8c8;
}
.status-set { display: flex; align-items: center; gap: 6px; padding-left: 2px; }
.status-set button { display: grid; place-items: center; width: 20px; height: 20px; }
.status-set svg { width: 20px; height: 20px; }
.status-set .on svg { width: 18px; height: 18px; }
.status-set.right { padding-right: 9px; }
.status-set.right .slim { width: 8px; margin: 0 -2px 0 -5px; }
.status-set.right .slim svg { width: 8px; }
.gap-a { flex: 10; }
.gap-b { flex: 9; }
.status output { color: #444; white-space: nowrap; }
.zoom { display: flex; align-items: center; gap: 9px; padding-left: 6px; }
.minus, .plus { width: 8px; height: 8px; background: linear-gradient(#999, #999) center / 8px 2px no-repeat; }
.plus { background: linear-gradient(#999, #999) center / 8px 2px no-repeat, linear-gradient(#999, #999) center / 2px 8px no-repeat; }
.zoom input {
  width: 61px;
  height: 16px;
  margin: 0;
  appearance: none;
  background: linear-gradient(#a6a6a6, #a6a6a6) center / 100% 1px no-repeat;
}
.zoom input::-webkit-slider-thumb {
  appearance: none;
  width: 5px;
  height: 14px;
  border: 1px solid #999;
  background: #f0f0f0;
}
```
